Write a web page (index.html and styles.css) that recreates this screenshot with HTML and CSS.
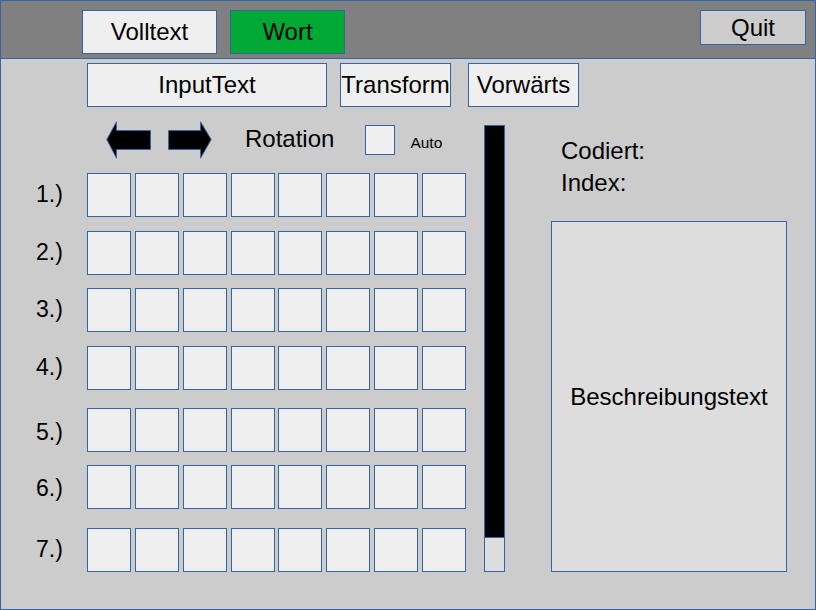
FILE: index.html
```html
<!DOCTYPE html>
<html lang="de">
<head>
<meta charset="utf-8">
<title>Rotation</title>
<link rel="stylesheet" href="styles.css">
</head>
<body>
<div class="frame">
  <header class="topbar">
    <div class="btn mode">Volltext</div>
    <div class="btn mode wort">Wort</div>
    <div class="btn quit">Quit</div>
  </header>
  <main class="main">
    <div class="toolbar">
      <div class="btn input">InputText</div>
      <div class="btn tool transform">Transform</div>
      <div class="btn tool forward">Vorwärts</div>
    </div>
    <div class="content">
      <section class="left">
        <div class="rotrow">
          <svg class="arrow arrow-left" width="45" height="38" viewBox="0 0 45 38">
            <polygon points="0.8,18.5 10.5,0.8 10.5,9.5 44.5,9.5 44.5,28.5 10.5,28.5 10.5,37.2" fill="#000" stroke="#3465a4" stroke-width="1"/>
          </svg>
          <svg class="arrow arrow-right" width="44" height="38" viewBox="0 0 44 38">
            <polygon points="0.5,9.5 32.5,9.5 32.5,0.8 43.2,18.5 32.5,37.2 32.5,28.5 0.5,28.5" fill="#000" stroke="#3465a4" stroke-width="1"/>
          </svg>
          <span class="rotation">Rotation</span>
          <span class="check"></span>
          <span class="auto">Auto</span>
        </div>
        <div class="row r1"><span class="label">1.)</span><div class="cells"><span class="cell"></span><span class="cell"></span><span class="cell"></span><span class="cell"></span><span class="cell"></span><span class="cell"></span><span class="cell"></span><span class="cell"></span></div></div>
        <div class="row r2"><span class="label">2.)</span><div class="cells"><span class="cell"></span><span class="cell"></span><span class="cell"></span><span class="cell"></span><span class="cell"></span><span class="cell"></span><span class="cell"></span><span class="cell"></span></div></div>
        <div class="row r3"><span class="label">3.)</span><div class="cells"><span class="cell"></span><span class="cell"></span><span class="cell"></span><span class="cell"></span><span class="cell"></span><span class="cell"></span><span class="cell"></span><span class="cell"></span></div></div>
        <div class="row r4"><span class="label">4.)</span><div class="cells"><span class="cell"></span><span class="cell"></span><span class="cell"></span><span class="cell"></span><span class="cell"></span><span class="cell"></span><span class="cell"></span><span class="cell"></span></div></div>
        <div class="row r5"><span class="label">5.)</span><div class="cells"><span class="cell"></span><span class="cell"></span><span class="cell"></span><span class="cell"></span><span class="cell"></span><span class="cell"></span><span class="cell"></span><span class="cell"></span></div></div>
        <div class="row r6"><span class="label">6.)</span><div class="cells"><span class="cell"></span><span class="cell"></span><span class="cell"></span><span class="cell"></span><span class="cell"></span><span class="cell"></span><span class="cell"></span><span class="cell"></span></div></div>
        <div class="row r7"><span class="label">7.)</span><div class="cells"><span class="cell"></span><span class="cell"></span><span class="cell"></span><span class="cell"></span><span class="cell"></span><span class="cell"></span><span class="cell"></span><span class="cell"></span></div></div>
      </section>
      <div class="slider">
        <div class="fill"></div>
        <div class="thumb"></div>
      </div>
      <section class="right">
        <div class="info">
          <div>Codiert:</div>
          <div>Index:</div>
        </div>
        <div class="desc">Beschreibungstext</div>
      </section>
    </div>
  </main>
</div>
</body>
</html>
```
FILE: styles.css
```css
* { box-sizing: border-box; }
html, body { margin: 0; padding: 0; }
body {
  font-family: "Liberation Sans", Arial, sans-serif;
  color: #000;
  background: #cccccc;
}
.frame {
  width: 816px;
  height: 610px;
  border: 1px solid #3465a4;
  background: #cccccc;
  display: flex;
  flex-direction: column;
}
.btn {
  display: flex;
  align-items: center;
  justify-content: center;
  border: 1px solid #3465a4;
  background: #efefef;
  font-size: 24px;
  white-space: nowrap;
}
.topbar {
  height: 58px;
  flex: none;
  background: #808080;
  border-bottom: 1px solid #3465a4;
  display: flex;
  align-items: flex-start;
  padding: 9px 9px 0 81px;
}
.mode { width: 135px; height: 44px; }
.wort { width: 115px; margin-left: 13px; background: #00a933; }
.quit { width: 106px; height: 35px; margin-left: auto; background: #cccccc; }

.main { flex: 1; }
.toolbar {
  display: flex;
  margin-top: 4px;
  padding-left: 86px;
}
.input { width: 240px; height: 44px; }
.tool { width: 111px; height: 44px; }
.transform { margin-left: 13px; }
.forward { margin-left: 17px; }

.content { display: flex; align-items: flex-start; }
.left { width: 465px; flex: none; }
.rotrow {
  display: flex;
  align-items: center;
  height: 38px;
  margin-top: 14px;
  padding-left: 105px;
}
.arrow { display: block; flex: none; }
.arrow-right { margin-left: 17px; }
.rotation { font-size: 24px; margin-left: 33px; margin-bottom: 3px; }
.check {
  width: 30px;
  height: 30px;
  margin-left: 31px;
  border: 1px solid #3465a4;
  background: #efefef;
}
.auto { font-size: 15.5px; margin-left: 15px; margin-top: 5px; }

.row {
  display: flex;
  align-items: center;
  height: 44px;
}
.r1 { margin-top: 14px; }
.r2 { margin-top: 14px; }
.r3 { margin-top: 13px; }
.r4 { margin-top: 14px; }
.r5 { margin-top: 18px; }
.r6 { margin-top: 13px; }
.r7 { margin-top: 19px; }
.label {
  width: 86px;
  padding-left: 35px;
  font-size: 23px;
  margin-bottom: 1px;
}
.r5 .label { margin-bottom: 0; margin-top: 5px; }
.r6 .label { margin-bottom: 0; margin-top: 2px; }
.cells {
  width: 379px;
  display: flex;
  justify-content: space-between;
}
.cell {
  width: 44px;
  height: 44px;
  border: 1px solid #3465a4;
  background: #efefef;
}

.slider {
  flex: none;
  width: 21px;
  height: 447px;
  margin-left: 18px;
  margin-top: 18px;
  border: 1px solid #3465a4;
  display: flex;
  flex-direction: column;
}
.fill { flex: 1; background: #000; }
.thumb {
  height: 34px;
  border-top: 1px solid #3465a4;
  background: #dddddd;
}

.right { margin-left: 46px; flex: none; }
.info {
  margin-top: 28px;
  padding-left: 10px;
  font-size: 24px;
  line-height: 32px;
}
.desc {
  margin-top: 22px;
  width: 236px;
  height: 351px;
  border: 1px solid #3465a4;
  background: #dddddd;
  display: flex;
  align-items: center;
  justify-content: center;
  font-size: 24px;
}
```
